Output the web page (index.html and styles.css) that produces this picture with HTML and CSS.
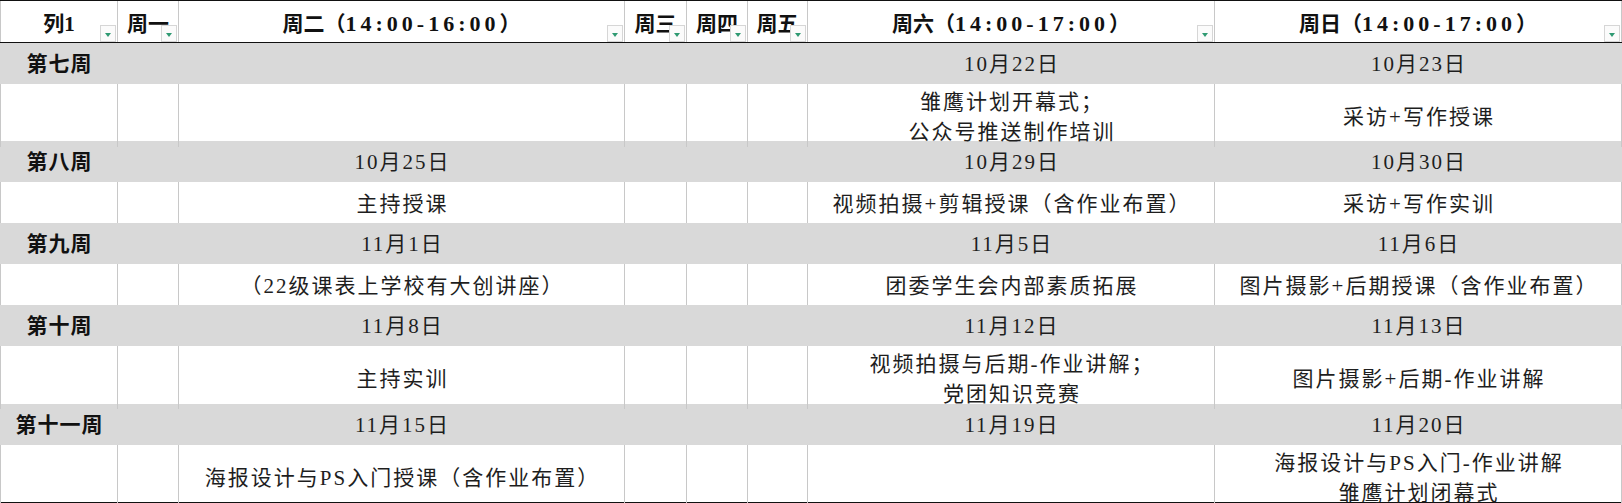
FILE: index.html
```html
<!DOCTYPE html>
<html lang="zh-CN">
<head>
<meta charset="utf-8">
<title>课表</title>
<link rel="stylesheet" href="styles.css">
</head>
<body>
<div class="sheet">
  <div class="row head">
    <div class="cell">列1<i class="flt"></i></div>
    <div class="cell">周一<i class="flt"></i></div>
    <div class="cell">周二（<span class="tm">14:00-16:00</span>）<i class="flt"></i></div>
    <div class="cell">周三<i class="flt"></i></div>
    <div class="cell">周四<i class="flt"></i></div>
    <div class="cell">周五<i class="flt"></i></div>
    <div class="cell">周六（<span class="tm">14:00-17:00</span>）<i class="flt"></i></div>
    <div class="cell">周日（<span class="tm">14:00-17:00</span>）<i class="flt"></i></div>
  </div>

  <div class="row week">
    <div class="cell wk">第七周</div><div class="cell"></div><div class="cell"></div><div class="cell"></div><div class="cell"></div><div class="cell"></div>
    <div class="cell">10月22日</div><div class="cell">10月23日</div>
  </div>
  <div class="row body h57">
    <div class="cell"></div><div class="cell"></div><div class="cell"></div><div class="cell"></div><div class="cell"></div><div class="cell"></div>
    <div class="cell">雏鹰计划开幕式；<br>公众号推送制作培训</div><div class="cell">采访+写作授课</div>
  </div>

  <div class="row week">
    <div class="cell wk">第八周</div><div class="cell"></div><div class="cell">10月25日</div><div class="cell"></div><div class="cell"></div><div class="cell"></div>
    <div class="cell">10月29日</div><div class="cell">10月30日</div>
  </div>
  <div class="row body">
    <div class="cell"></div><div class="cell"></div><div class="cell">主持授课</div><div class="cell"></div><div class="cell"></div><div class="cell"></div>
    <div class="cell">视频拍摄+剪辑授课（含作业布置）</div><div class="cell">采访+写作实训</div>
  </div>

  <div class="row week">
    <div class="cell wk">第九周</div><div class="cell"></div><div class="cell">11月1日</div><div class="cell"></div><div class="cell"></div><div class="cell"></div>
    <div class="cell">11月5日</div><div class="cell">11月6日</div>
  </div>
  <div class="row body">
    <div class="cell"></div><div class="cell"></div><div class="cell">（22级课表上学校有大创讲座）</div><div class="cell"></div><div class="cell"></div><div class="cell"></div>
    <div class="cell">团委学生会内部素质拓展</div><div class="cell">图片摄影+后期授课（含作业布置）</div>
  </div>

  <div class="row week">
    <div class="cell wk">第十周</div><div class="cell"></div><div class="cell">11月8日</div><div class="cell"></div><div class="cell"></div><div class="cell"></div>
    <div class="cell">11月12日</div><div class="cell">11月13日</div>
  </div>
  <div class="row body h58">
    <div class="cell"></div><div class="cell"></div><div class="cell">主持实训</div><div class="cell"></div><div class="cell"></div><div class="cell"></div>
    <div class="cell">视频拍摄与后期-作业讲解；<br>党团知识竞赛</div><div class="cell">图片摄影+后期-作业讲解</div>
  </div>

  <div class="row week">
    <div class="cell wk">第十一周</div><div class="cell"></div><div class="cell">11月15日</div><div class="cell"></div><div class="cell"></div><div class="cell"></div>
    <div class="cell">11月19日</div><div class="cell">11月20日</div>
  </div>
  <div class="row body h57">
    <div class="cell"></div><div class="cell"></div><div class="cell">海报设计与PS入门授课（含作业布置）</div><div class="cell"></div><div class="cell"></div><div class="cell"></div>
    <div class="cell"></div><div class="cell">海报设计与PS入门-作业讲解<br>雏鹰计划闭幕式</div>
  </div>
</div>
</body>
</html>
```

FILE: styles.css
```css
html, body {
  margin: 0;
  padding: 0;
  background: #ffffff;
}

.sheet {
  width: 1622px;
  border-top: 1px solid #111;
  border-bottom: 1px solid #111;
  font-family: "Liberation Serif", "Noto Sans CJK SC", serif;
  font-size: 21px;
  color: #1e1e1e;
}

.row {
  display: grid;
  grid-template-columns: 118px 61px 446px 62px 61px 60px 407px 407px;
  height: 41px;
}

.cell {
  position: relative;
  box-sizing: border-box;
  border-right: 1px solid #c8c8c8;
  display: flex;
  align-items: center;
  justify-content: center;
  text-align: center;
  line-height: 30px;
  white-space: nowrap;
}

.cell:first-child {
  border-left: 1px solid #c8c8c8;
}

.week .cell,
.body .cell {
  letter-spacing: 2px;
  padding-left: 2px;
}

.body .cell {
  padding-top: 3px;
}

.head {
  height: 41px;
  border-bottom: 1px solid #111;
  font-weight: 700;
  color: #111;
}

.head .cell {
  padding-top: 5px;
}

.tm {
  font-size: 22px;
  letter-spacing: 4px;
}

.flt {
  position: absolute;
  right: 1px;
  bottom: 0;
  width: 16px;
  height: 17px;
  box-sizing: border-box;
  border: 1px solid #d6d6d6;
  background: #fbfbfb;
  display: flex;
  align-items: center;
  justify-content: center;
}

.flt::after {
  content: "";
  width: 0;
  height: 0;
  border-left: 3.5px solid transparent;
  border-right: 3.5px solid transparent;
  border-top: 4px solid #2f9a72;
  margin-top: 2px;
}

.week {
  background: #d9d9d9;
}

.week .cell {
  border-color: transparent;
}

.week .wk {
  font-weight: 700;
  color: #111;
  letter-spacing: 1px;
  padding-left: 1px;
}

.h57 {
  height: 57px;
}

.h58 {
  height: 58px;
}
```
